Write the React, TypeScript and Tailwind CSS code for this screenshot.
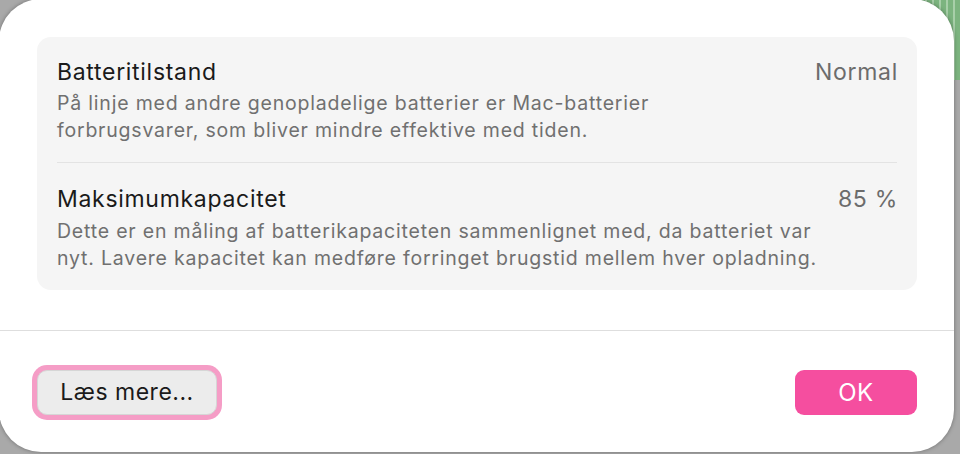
import React from 'react';

interface InfoRowProps {
  title: string;
  value: string;
  lines: string[];
  className?: string;
}

const InfoRow: React.FC<InfoRowProps> = ({ title, value, lines, className }) => {
  return (
    <div className={`flex items-start justify-between pl-5 pr-[19px] ${className ?? ''}`}>
      <div className="flex flex-col">
        <h2 className="text-[23px] leading-[27px] tracking-[0.7px] text-[#1a1a1a]">{title}</h2>
        <p className="text-[19.5px] leading-[27px] tracking-[0.8px] text-[#707070]">
          {lines.map((line) => (
            <span key={line} className="block whitespace-nowrap">{line}</span>
          ))}
        </p>
      </div>
      <span className="text-[23px] leading-[27px] tracking-[0.7px] text-[#6c6c6c]">{value}</span>
    </div>
  );
};

export default function App() {
  return (
    <div className="relative w-[960px] h-[454px] overflow-hidden bg-[#a9a9a9] font-['Inter','Noto_Sans',sans-serif]">
      {/* desktop window peeking out behind the sheet */}
      <div className="absolute right-0 top-0 h-[80px] w-[75px] bg-[repeating-linear-gradient(90deg,#7cb47f_0px,#7cb47f_5px,#a8cfa9_5px,#a8cfa9_7px)]" />

      <div className="relative -ml-px -mt-px flex h-[453px] w-[955px] flex-col rounded-[42px] bg-white shadow-[0_0_4px_rgba(0,0,0,0.35)]">
        <div className="px-[38px] pr-[37px] pt-[38px]">
          <div className="h-[253px] rounded-[14px] bg-[#f5f5f5]">
            <InfoRow
              className="pt-[22px] pb-[18px] [&_p]:mt-[4px]"
              title="Batteritilstand"
              value="Normal"
              lines={[
                'På linje med andre genopladelige batterier er Mac-batterier',
                'forbrugsvarer, som bliver mindre effektive med tiden.',
              ]}
            />
            <div className="mx-5 h-px bg-[#e3e3e3]" />
            <InfoRow
              className="pt-[23px] pb-4 [&_p]:mt-[5px]"
              title="Maksimumkapacitet"
              value="85 %"
              lines={[
                'Dette er en måling af batterikapaciteten sammenlignet med, da batteriet var',
                'nyt. Lavere kapacitet kan medføre forringet brugstid mellem hver opladning.',
              ]}
            />
          </div>
        </div>

        <div className="mt-10 h-px bg-[#dedede]" />

        <div className="flex items-center justify-between pl-[38px] pr-[37px] pt-[39px]">
          <button className="flex h-[45px] w-[180px] items-center justify-center rounded-[10px] border border-[#d6d6d6] bg-[#ececec] text-[23px] tracking-[0.5px] text-[#1a1a1a] ring-[5px] ring-[#f59dc6]">
            Læs mere...
          </button>
          <button className="flex h-[45px] w-[122px] items-center justify-center rounded-[9px] bg-[#f54e9f] text-[24px] tracking-[0.5px] text-white">
            OK
          </button>
        </div>
      </div>
    </div>
  );
}
